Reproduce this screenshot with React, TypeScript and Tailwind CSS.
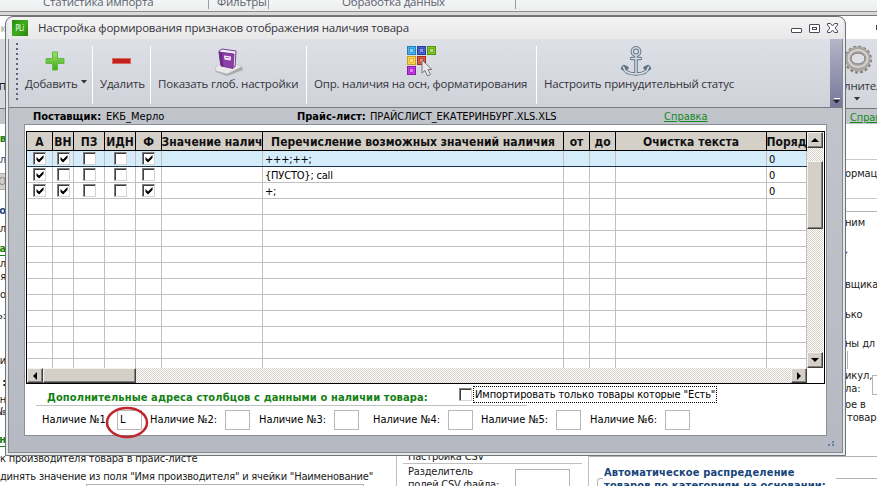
import { ReactNode } from 'react';
import clsx from 'clsx';

const tahoma = "[font-family:'DejaVu_Sans_Condensed','DejaVu_Sans',sans-serif]";
const segoe = "[font-family:'Open_Sans','Noto_Sans',sans-serif]";

const columns = [
  { title: 'А', width: 'w-[26px]' },
  { title: 'ВН', width: 'w-[21px]' },
  { title: 'ПЗ', width: 'w-[31px]' },
  { title: 'ИДН', width: 'w-[31px]' },
  { title: 'Ф', width: 'w-[26px]' },
  { title: 'Значение налич', width: 'w-[101px]' },
  { title: 'Перечисление возможных значений наличия', width: 'w-[301px]' },
  { title: 'от', width: 'w-[26px]' },
  { title: 'до', width: 'w-[26px]' },
  { title: 'Очистка текста', width: 'w-[151px]' },
  { title: 'Поряд', width: 'w-[40px]' },
];

const rows = [
  { checks: [true, true, false, false, true], values: '+++;++;', order: '0' },
  { checks: [true, false, false, false, false], values: '{ПУСТО}; call', order: '0' },
  { checks: [true, true, false, false, true], values: '+;', order: '0' },
];

const addresses = [
  { label: 'Наличие №1:', value: 'L', slot: 'w-[108px]' },
  { label: 'Наличие №2:', value: '', slot: 'w-[109px]' },
  { label: 'Наличие №3:', value: '', slot: 'w-[114px]' },
  { label: 'Наличие №4:', value: '', slot: 'w-[108px]' },
  { label: 'Наличие №5:', value: '', slot: 'w-[109px]' },
  { label: 'Наличие №6:', value: '', slot: 'w-[101px]' },
];

const leftLines = [
  { text: 'ев', style: 'mt-[9px] font-bold text-[#128012]' },
  { text: 'ол', style: 'mt-[9px] text-[#17457a]' },
  { text: 'НО', style: 'mt-[7px] h-[17px] items-center bg-[#d4d0c8] text-[#888] border-y border-[#aaa]' },
  { text: 'ро', style: 'mt-[15px] font-bold text-[#17457a]' },
  { text: 'ол', style: 'mt-[6px]' },
  { text: 'а', style: 'mt-[8px] font-bold text-[#128012] border-b border-[#128012]' },
  { text: 'л', style: 'mt-[2px]' },
  { text: 'ля', style: 'mt-[1px]' },
  { text: 'о', style: 'mt-[6px]' },
  { text: 'ь:', style: 'mt-[9px]' },
  { text: 'и', style: 'mt-[33px]' },
  { text: ':', style: 'mt-[10px] font-bold' },
  { text: 'н', style: 'mt-[5px]' },
  { text: '№', style: '' },
  { text: 'н', style: 'mt-[16px] font-bold text-[#128012] border-b border-[#128012]' },
];

const rightLines = [
  { text: '', style: 'mt-[35px] h-px bg-[#c8c8c8]' },
  { text: 'ормац', style: 'mt-[8px] h-3' },
  { text: '', style: 'mt-[18px] h-px bg-[#c8c8c8]' },
  { text: '', style: 'mt-[12px] h-px bg-[#b4b4b4]' },
  { text: 'ним', style: 'mt-[5px] h-3' },
  { text: ',', style: 'mt-[15px] h-3 text-[#17457a]' },
  { text: 'вщика', style: 'mt-[23px] h-3' },
  { text: 'ько', style: 'mt-[18px] h-3' },
  { text: 'ны дл', style: 'mt-[17px] h-3' },
  { text: '', style: 'mt-px h-[18px] w-[3px] border-r border-[#b4b4b4]' },
];

function CheckBox({ checked }: { checked?: boolean }) {
  return (
    <span className="block h-[13px] w-[13px] shrink-0 border border-t-[#808080] border-l-[#808080] border-r-[#d8d4cc] border-b-[#d8d4cc] bg-white">
      <span className="block h-[11px] w-[11px] border-t border-l border-[#404040]">
        {checked && (
          <svg viewBox="0 0 10 10" className="h-[10px] w-[10px]">
            <path d="M1.500 3v3L4 8.500 8.500 4V1L4 5.500z" fill="#000" />
          </svg>
        )}
      </span>
    </span>
  );
}

function ScrollButton({ path, className }: { path: string; className: string }) {
  return (
    <div
      className={clsx(
        'flex shrink-0 items-center justify-center border border-t-[#f4f2ee] border-l-[#f4f2ee] border-r-[#404040] border-b-[#404040] bg-[#d4d0c8] shadow-[inset_-1px_-1px_0_#808080]',
        className
      )}
    >
      <svg viewBox="0 0 8 8" className="h-2 w-2">
        <path d={path} fill="#000" />
      </svg>
    </div>
  );
}

function ToolButton({ label, icon, className }: { label: ReactNode; icon: ReactNode; className: string }) {
  return (
    <div className={clsx('flex h-[58px] shrink-0 flex-col items-center', className)}>
      <div className="flex h-[29px] w-full items-center justify-center">{icon}</div>
      <div className="flex h-[18px] w-full items-center justify-start whitespace-nowrap pl-[7px] text-[11.5px] leading-[18px] tracking-[-0.2px] text-[#33333b]">
        {label}
      </div>
    </div>
  );
}

function PlusIcon() {
  return (
    <svg viewBox="0 0 20 20" className="mt-px h-5 w-5">
      <defs>
        <linearGradient id="plus" x1="0" y1="0" x2="0" y2="1">
          <stop offset="0" stopColor="#9be268" />
          <stop offset="1" stopColor="#3faa1c" />
        </linearGradient>
      </defs>
      <path d="M7.500 1h5v6.500H19v5h-6.500V19h-5v-6.500H1v-5h6.500z" fill="url(#plus)" stroke="#62b840" strokeWidth="1" />
    </svg>
  );
}

function BookIcon() {
  return (
    <svg viewBox="0 0 30 28" className="mt-[3px] h-7 w-[30px]">
      <path d="M1 21 10 13 28 19 29 22 13 28 2 24z" fill="#aaa9ad" />
      <path d="M1 20 10 12 28 18.500 13 26 2 23z" fill="#e8e8ea" stroke="#bbb" strokeWidth=".6" />
      <path d="M5 3 8 1 22 3 21 19 7 17z" fill="#f4eef6" stroke="#7a3d93" strokeWidth="1" />
      <path d="M5 4 20 6 19 20.500 7 18z" fill="#8c3fa8" stroke="#65277f" strokeWidth=".8" />
      <path d="M5 4 8 4.500 9.500 18.500 7 18z" fill="#6d2a88" />
      <path d="M10 7.500 17 8.500 16.700 12.500 10.500 11.500z" fill="#f6eff8" />
      <path d="M11.500 9.300 15.500 9.900" stroke="#8c3fa8" strokeWidth=".8" />
    </svg>
  );
}

function PaletteIcon() {
  const cells = [
    { x: 1, y: 1, fill: '#48b4ee', edge: '#2480bd' },
    { x: 11, y: 1, fill: '#4866dc', edge: '#243a9c' },
    { x: 21, y: 1, fill: '#82c827', edge: '#549110' },
    { x: 1, y: 11, fill: '#fbd54b', edge: '#cf9e20' },
    { x: 11, y: 11, fill: '#e35a3c', edge: '#a52f1b' },
    { x: 1, y: 21, fill: '#c93ceb', edge: '#8b17a8' },
  ];
  return (
    <svg viewBox="0 0 30 31" className="mt-px h-[31px] w-[30px] shrink-0">
      {cells.map((cell) => (
        <g key={`${cell.x}-${cell.y}`}>
          <rect x={cell.x - 0.5} y={cell.y - 0.5} width="8" height="8" fill={cell.fill} stroke={cell.edge} />
          <rect x={cell.x + 1.5} y={cell.y + 1.5} width="4" height="4" fill="#fff" fillOpacity=".35" stroke={cell.edge} strokeWidth=".6" />
        </g>
      ))}
      <path d="M15 14v13l3-2.500 2.500 5.500 3-1.500-2.500-5H25z" fill="#e6e6e6" stroke="#77777c" strokeWidth="1" />
    </svg>
  );
}

function AnchorIcon() {
  return (
    <svg viewBox="0 0 32 32" className="-ml-[2px] h-8 w-8 shrink-0" fill="none" strokeLinecap="round" strokeLinejoin="round">
      <g stroke="#5e7083" strokeWidth="3.400">
        <circle cx="16" cy="6.500" r="3.700" />
        <path d="M16 11v18M11.500 13.500h9M3.500 22c1 5 6 7 12.500 7s11.500-2 12.500-7M2.500 23.500l1.500-2 3 1.500M29.500 23.500l-1.500-2-3 1.500" />
      </g>
      <g stroke="#d5dee6" strokeWidth="1.500">
        <circle cx="16" cy="6.500" r="3.700" />
        <path d="M16 11v18M11.500 13.500h9M3.500 22c1 5 6 7 12.500 7s11.500-2 12.500-7" />
      </g>
    </svg>
  );
}

function GearIcon() {
  return (
    <svg viewBox="0 0 30 30" className="h-[30px] w-[30px]">
      <circle cx="15" cy="15.500" r="12" fill="none" stroke="#85807c" strokeWidth="4" strokeDasharray="2.700 2" />
      <circle cx="15" cy="15" r="9" fill="none" stroke="#aaa6a3" strokeWidth="7" />
      <ellipse cx="15" cy="14.500" rx="9.500" ry="8.500" fill="none" stroke="#d6d3d1" strokeWidth="2" />
      <ellipse cx="15" cy="14.500" rx="7" ry="5.500" fill="#dcdfe4" stroke="#797573" />
    </svg>
  );
}

function Backdrop() {
  return (
    <div className="flex h-[486px] w-[877px] flex-col bg-white text-[11px] leading-3 tracking-[-0.1px] text-[#1a1a1a]">
      {/* Ribbon group captions */}
      <div className={clsx('flex h-[11px] shrink-0 overflow-hidden whitespace-nowrap bg-gradient-to-b from-[#f4f5f6] to-[#eceded] text-[11.5px] leading-4 tracking-[-0.2px] text-[#5c6470]', segoe)}>
        <div className="-mt-[6px] h-4 w-[208px] pl-[43px]">Статистика импорта</div>
        <div className="h-[9px] w-[60px] border-l border-[#9a9ca0]">
          <div className="-mt-[6px] pl-2">Фильтры</div>
        </div>
        <div className="h-[9px] w-[248px] border-x border-[#9a9ca0]">
          <div className="-mt-[6px] pl-[73px]">Обработка данных</div>
        </div>
      </div>
      <div className="h-[5px] shrink-0 border-t border-b border-t-[#8e8e8e] border-b-[#777] bg-[#d8d9da]" />

      <div className="flex h-[440px] shrink-0 justify-between">
        <div className="flex w-[6px] flex-col overflow-hidden">
          <div className={clsx('flex h-[23px] shrink-0 items-center justify-end text-[#999]', segoe)}>к</div>
          <div className={clsx('flex h-[69px] shrink-0 items-center justify-end bg-[#d6dae0] pt-[25px] text-[12px]', segoe)}>п</div>
          <div className="h-4 shrink-0 border-t border-[#777] bg-[#c2c5ca]" />
          {leftLines.map((line, index) => (
            <div key={index} className={clsx('flex min-h-3 shrink-0 justify-end', line.style)}>
              {line.text}
            </div>
          ))}
        </div>

        <div className="flex w-[32px] flex-col overflow-hidden whitespace-nowrap">
          <div className="flex h-[23px] shrink-0 items-center justify-end">
            <span className="h-[5px] w-px bg-[#444]" />
          </div>
          <div className={clsx('flex h-[69px] shrink-0 flex-col bg-gradient-to-b from-[#dcdfe5] to-[#d2d6dc] text-[11.5px] tracking-[-0.2px] text-[#33333b]', segoe)}>
            <div className="-ml-[2px] mt-[5px] h-[31px]">
              <GearIcon />
            </div>
            <div className="-ml-px h-4 leading-[22px]">лнител</div>
            <svg viewBox="0 0 6 4" className="ml-[9px] mt-[6px] h-1 w-[6px] shrink-0">
              <path d="M0 0h6L3 3.500z" fill="#333" />
            </svg>
          </div>
          <div className="h-4 shrink-0 border-t border-[#777] bg-[#c2c5ca] pl-[5px] leading-[17px] text-[#128a1e] underline">
            Справка
          </div>
          {rightLines.map((line, index) => (
            <div key={index} className={clsx('shrink-0', line.style)}>
              {line.text}
            </div>
          ))}
          <div className="mt-px flex shrink-0 justify-between">
            <div>
              икул,
              <div className="mt-px">ла:</div>
            </div>
            <div className="mt-[5px] h-5 w-[5px] shrink-0 border border-r-0 border-[#b4b4b4]" />
          </div>
          <div className="mt-1 shrink-0">ое в</div>
          <div className="mt-px shrink-0 pl-[2px]">товар</div>
        </div>
      </div>

      {/* Form fields under the dialog */}
      <div className="flex h-[30px] shrink-0 overflow-hidden whitespace-nowrap">
        <div className="w-[396px] shrink-0 tracking-[-0.2px]">
          <div className="-mt-[3px]">к производителя товара в прайс-листе</div>
          <div className="-ml-[6px] mt-[6px]">единять значение из поля "Имя производителя" и ячейки "Наименование"</div>
          <div className="ml-[86px] mt-px h-3 w-[278px] border border-[#b4b4b4]" />
        </div>
        <div className="flex w-[193px] shrink-0 flex-col border-x border-[#c0c0c0] pl-[6px] tracking-[-0.2px]">
          <div className="-mt-[5px] h-3 shrink-0 pl-[5px]">Настройка CSV</div>
          <div className="h-px w-[179px] shrink-0 bg-[#c0c0c0]" />
          <div className="flex">
            <div className="w-[112px] pl-[5px] pt-px leading-[13px]">
              Разделитель
              <br />
              полей CSV файла:
            </div>
            <div className="mt-[5px] h-6 w-[55px] border border-[#b4b4b4]" />
          </div>
        </div>
        <div className="flex flex-1 border-t border-[#b4b4b4] pl-2">
          <div className="mt-[21px] h-4 w-[6px] rounded-tl border-t border-l border-[#b4b4b4]" />
          <div className="w-[233px] pl-px pt-[9px] text-[11px] font-bold leading-[13px] tracking-[0.15px] text-[#17457a]">
            Автоматическое распределение
            <br />
            товаров по категориям на основании:
          </div>
          <div className="mt-[21px] h-px flex-1 bg-[#b4b4b4]" />
        </div>
      </div>
    </div>
  );
}

function TitleBar() {
  return (
    <div className={clsx('flex h-[22px] shrink-0 items-center rounded-t-md bg-gradient-to-b from-[#f4f4f4] to-[#e8e8e9] pl-1 text-[11.5px] tracking-[-0.2px] text-[#33333b]', segoe)}>
      <div className="flex h-4 w-4 items-center justify-center bg-gradient-to-br from-[#2d8a12] via-[#3fae1c] to-[#2a8210] text-[9px] leading-none tracking-normal text-white [font-family:'DejaVu_Sans_Condensed',sans-serif]">
        <span className="scale-x-75">PLi</span>
      </div>
      <span className="ml-[10px] whitespace-nowrap">Настройка формирования признаков отображения наличия товара</span>
      <svg viewBox="0 0 48 12" className="ml-auto mr-[5px] h-3 w-12" fill="#fff" stroke="#4a4c55">
        <rect x="1.500" y="6.500" width="10" height="4" rx=".5" />
        <rect x="19.500" y="2.500" width="10" height="8" rx=".5" />
        <rect x="22.500" y="5.500" width="4" height="2" />
        <path d="M37.500 1.500h3l2 2.500 2-2.500h3v1.500L45 6l2.500 3v1.500h-3l-2-2.500-2 2.500h-3V9l2.500-3-2.500-3z" />
      </svg>
    </div>
  );
}

function Toolbar() {
  const divider = <div className="h-[58px] w-px shrink-0 bg-white" />;
  return (
    <div className={clsx('flex h-[69px] shrink-0 border-b border-[#777b82] bg-gradient-to-b from-[#dde0e6] to-[#cfd3d9]', segoe)}>
      <div className="ml-[7px] mt-1 h-[60px] w-[2px] shrink-0 bg-[repeating-linear-gradient(to_bottom,#5c6480_0_2px,transparent_2px_5px)]" />
      <div className="flex pt-[7px]">
        <ToolButton
          className="w-[74px]"
          icon={<PlusIcon />}
          label={
            <>
              <span>Добавить</span>
              <svg viewBox="0 0 6 4" className="mb-1 ml-[3px] h-1 w-[6px]">
                <path d="M0 0h6L3 3.500z" fill="#333" />
              </svg>
            </>
          }
        />
        {divider}
        <ToolButton className="w-[57px]" icon={<div className="h-[6px] w-[19px] border border-[#d8685c] bg-[#c4201c]" />} label="Удалить" />
        {divider}
        <ToolButton className="w-[155px]" icon={<BookIcon />} label="Показать глоб. настройки" />
        {divider}
        <ToolButton className="w-[229px]" icon={<PaletteIcon />} label="Опр. наличия на осн, форматирования" />
        {divider}
        <ToolButton className="w-[200px]" icon={<AnchorIcon />} label="Настроить принудительный статус" />
      </div>
      <div className="ml-auto flex w-3 items-end justify-center bg-gradient-to-b from-[#b4b5c6] to-[#77789a] pb-[3px]">
        <svg viewBox="0 0 7 6" className="h-[6px] w-[7px]">
          <path d="M1 0h6v1H1z" fill="#fff" />
          <path d="M0 2h7L3.500 5.500z" fill="#222" />
        </svg>
      </div>
    </div>
  );
}

function Grid() {
  return (
    <div className="flex h-[253px] w-[799px] shrink-0 flex-col border border-black bg-white">
      <div className="flex h-[236px] shrink-0">
        <div className="flex h-[236px] w-[780px] shrink-0 flex-col overflow-hidden">
          <div className="flex h-[19px] shrink-0 border-b border-black">
            {columns.map((column) => (
              <div
                key={column.title}
                className={clsx(
                  'flex shrink-0 items-center justify-center overflow-hidden whitespace-nowrap border-r border-black bg-[#d4d0c8] pt-[2px] text-[12px] font-bold leading-none text-[#111]',
                  column.width
                )}
              >
                {column.title}
              </div>
            ))}
          </div>
          {Array.from({ length: 14 }, (_, index) => {
            const row = rows[index];
            return (
              <div
                key={index}
                className={clsx('flex h-4 shrink-0 border-b', index === 0 ? 'border-[#16324e] bg-[#d5ecfb]' : 'border-[#c0c0c0]')}
              >
                {columns.map((column, cell) => (
                  <div
                    key={column.title}
                    className={clsx(
                      'flex shrink-0 items-center overflow-hidden whitespace-nowrap border-r border-[#c0c0c0] text-[11px] leading-none tracking-[-0.2px]',
                      cell < 5 ? 'justify-center' : 'pl-[2px] pt-[2px]',
                      column.width
                    )}
                  >
                    {row && cell < 5 && <CheckBox checked={row.checks[cell]} />}
                    {row && cell === 6 && row.values}
                    {row && cell === 10 && row.order}
                  </div>
                ))}
              </div>
            );
          })}
        </div>
        <div className="flex w-4 flex-col bg-[repeating-conic-gradient(#d4d0c8_0_25%,#fff_0_50%)] bg-[length:2px_2px]">
          <ScrollButton className="h-4 w-4" path="M4 2l4 4H0z" />
          <div className="mt-[13px] h-[68px] border border-t-[#f4f2ee] border-l-[#f4f2ee] border-r-[#404040] border-b-[#404040] bg-[#d4d0c8] shadow-[inset_-1px_-1px_0_#808080]" />
          <ScrollButton className="mt-auto h-4 w-4" path="M0 2h8L4 6z" />
        </div>
      </div>
      <div className="flex h-[15px] w-[780px] bg-[repeating-conic-gradient(#d4d0c8_0_25%,#fff_0_50%)] bg-[length:2px_2px]">
        <ScrollButton className="h-[15px] w-4" path="M2 4l4-4v8z" />
        <div className="h-[15px] w-[93px] border border-t-[#f4f2ee] border-l-[#f4f2ee] border-r-[#404040] border-b-[#404040] bg-[#d4d0c8] shadow-[inset_-1px_-1px_0_#808080]" />
        <ScrollButton className="ml-auto h-[15px] w-4" path="M6 4L2 0v8z" />
      </div>
    </div>
  );
}

function AddressPanel() {
  return (
    <div className="-ml-px flex flex-col">
      <div className="flex h-[21px]">
        <div className="w-[434px] shrink-0 whitespace-nowrap pl-[22px] pt-[8px] text-[11px] font-bold leading-3 tracking-[0.13px] text-[#128012]">
          Дополнительные адреса столбцов с данными о наличии товара:
        </div>
        <div className="mt-1">
          <CheckBox />
        </div>
        <div className="ml-px mt-[2px] flex h-[17px] w-[244px] items-center whitespace-nowrap border border-dotted border-black pl-px pt-px text-[11px] tracking-[-0.1px]">
          Импортировать только товары которые "Есть"
        </div>
      </div>
      <div className="ml-[11px] h-px w-[491px] bg-[#c0c0c0]" />
      <div className="flex pl-[17px] pt-1">
        {addresses.map((item) => (
          <div key={item.label} className={clsx('flex h-5 shrink-0 items-center', item.slot)}>
            <span className="w-[75px] shrink-0 whitespace-nowrap pt-px text-[11px] tracking-[-0.05px]">{item.label}</span>
            <span className="flex h-5 w-[25px] items-center border border-[#b8b8b8] pl-[2px] text-[11px]">{item.value}</span>
          </div>
        ))}
      </div>
    </div>
  );
}

function Dialog() {
  return (
    <div className="absolute left-[5px] top-4 flex h-[440px] w-[841px] flex-col rounded-t-lg border border-[#6f7276] bg-[#e6e9ec] px-[2px] pb-[2px] text-black">
      <TitleBar />
      <div className="flex flex-1 flex-col border border-t-0 border-[#85888f] bg-gradient-to-b from-[#c3c6cb] to-[#b6b9c2]">
        <Toolbar />
        <div className="flex h-4 shrink-0 items-center whitespace-nowrap pt-[2px] text-[11px] leading-[14px]">
          <b className="w-[97px] pl-[24px]">Поставщик:</b>
          <span className="w-[191px]">ЕКБ_Мерло</span>
          <b className="w-[73px]">Прайс-лист:</b>
          <span className="w-[294px] tracking-[-0.07px]">ПРАЙСЛИСТ_ЕКАТЕРИНБУРГ.XLS.XLS</span>
          <span className="text-[#128a1e] underline">Справка</span>
        </div>
        <div className="ml-[15px] flex h-[312px] w-[803px] shrink-0 flex-col border border-[#8c9096] bg-white pl-px pt-[6px]">
          <Grid />
          <AddressPanel />
        </div>
        <svg viewBox="0 0 7 6" className="ml-auto mr-[7px] mt-[5px] h-[6px] w-[7px]" fill="#5f7fae">
          <path d="M4 0h2v2H4zM0 3h2v2H0zM4 3h2v2H4z" />
        </svg>
      </div>
      <svg viewBox="0 0 46 36" className="absolute left-[98px] top-[387px] h-9 w-[46px]" fill="none">
        <ellipse cx="23" cy="18.500" rx="20" ry="14.500" stroke="#c0272d" strokeWidth="2.500" />
      </svg>
    </div>
  );
}

export default function App() {
  return (
    <div className={clsx('relative h-[486px] w-[877px] overflow-hidden', tahoma)}>
      <Backdrop />
      <Dialog />
    </div>
  );
}
